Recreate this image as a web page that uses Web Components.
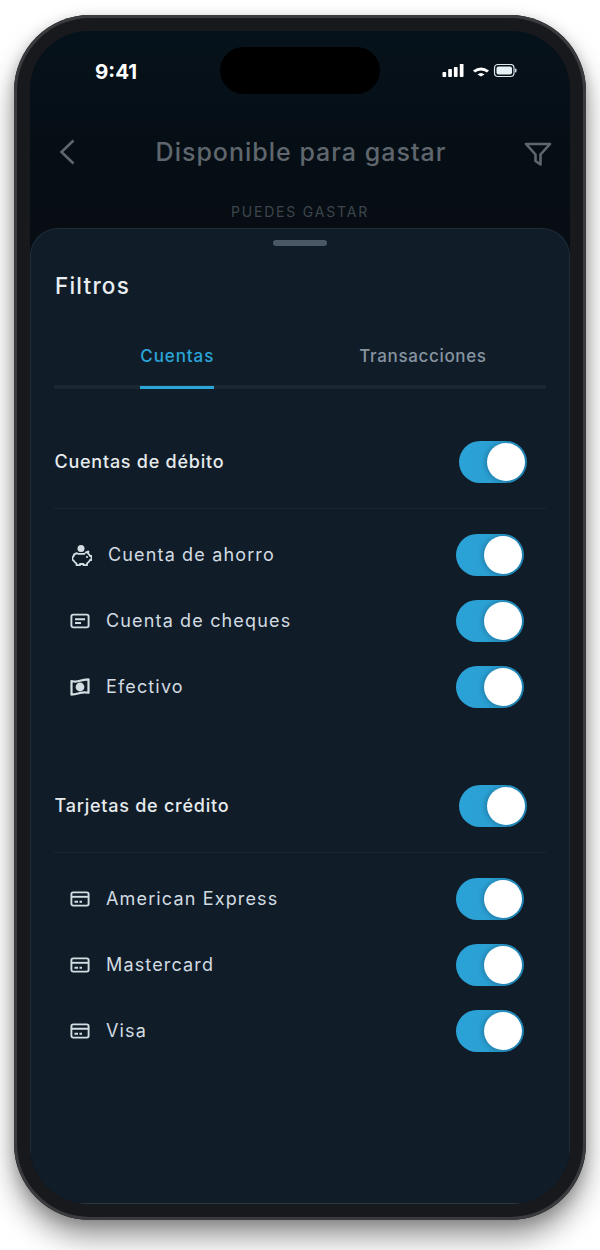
<!DOCTYPE html>
<html lang="es"><head><meta charset="utf-8"><title>Filtros</title>
<style>
html,body{margin:0;background:#fff}
body{font-family:Inter,"Noto Sans",sans-serif;padding:15px 14px 30px}
</style></head><body>
<x-phone>
  <x-status></x-status>
  <x-appbar></x-appbar>
  <x-sheet>
    <x-tabs></x-tabs>
    <x-section label="Cuentas de débito">
      <x-row icon="piggy" label="Cuenta de ahorro"></x-row>
      <x-row icon="cheque" label="Cuenta de cheques"></x-row>
      <x-row icon="cash" label="Efectivo"></x-row>
    </x-section>
    <x-section label="Tarjetas de crédito">
      <x-row icon="card" label="American Express"></x-row>
      <x-row icon="card" label="Mastercard"></x-row>
      <x-row icon="card" label="Visa"></x-row>
    </x-section>
  </x-sheet>
</x-phone>
<script>
const def=(name,html)=>customElements.define(name,class extends HTMLElement{
  connectedCallback(){ if(this.shadowRoot) return;
    const g=k=>this.getAttribute(k)||'';
    this.attachShadow({mode:'open'}).innerHTML=typeof html==='function'?html(g):html; }
});
def('x-phone',`<style>
:host{display:block;width:572px;height:1205px;box-sizing:border-box;border-radius:76px;background:#18191c;
 box-shadow:inset 0 0 0 3px #3a3b3e,0 18px 28px rgba(0,0,0,.38),0 4px 14px rgba(0,0,0,.2);padding:16px}
.screen{position:relative;height:100%;border-radius:58px;overflow:hidden;background:linear-gradient(180deg,#06121b 0,#060e15 120px,#070d13 200px);display:flex;flex-direction:column}
.island{position:absolute;left:190px;top:16px;width:160px;height:47px;border-radius:24px;background:#000}
</style><div class="screen"><slot></slot><div class="island"></div></div>`);
def('x-status',`<style>
:host{display:flex;justify-content:space-between;align-items:center;height:82px;padding:0 53px 0 65px;box-sizing:border-box;color:#fff}
.t{font:700 20.5px/1 Inter,sans-serif}
svg{display:block}
</style><span class="t">9:41</span>
<svg width="76" height="16" viewBox="0 0 76 16" fill="#fff">
<rect x="1.500" y="8" width="3.700" height="5" rx=".8"/><rect x="7.200" y="5" width="3.700" height="8" rx=".8"/><rect x="12.900" y="3" width="3.700" height="10" rx=".8"/><rect x="18.800" y="-.5" width="3.700" height="13.500" rx=".8"/>
<path d="M32 6.500 Q40 .5 48 6.500 L46 8.500 Q40 4.500 34 8.500Z"/><path d="M36.500 10.500 Q40 7.500 43.500 10.500 L40 12.500Z"/>
<rect x="53.500" y=".5" width="19.500" height="12" rx="3.500" fill="none" stroke="#dfe6ea" stroke-width="1.200"/><rect x="55.500" y="2.500" width="15.500" height="8" rx="2" fill="#e6f0f5"/><rect x="74" y="4.500" width="1.500" height="4" rx=".7" fill="#cfd6da"/>
</svg>`);
def('x-appbar',`<style>
:host{display:block;height:115px;box-sizing:border-box;text-align:center}
.bar{display:flex;align-items:center;justify-content:space-between;height:62px;margin-top:8px;padding:0 18px 0 28px}
h1{margin:0;font:500 25px/1 Inter,sans-serif;letter-spacing:1px;color:#5f666d}
p{margin:21px 0 0;font:400 14px/16px Inter,sans-serif;letter-spacing:1.8px;color:#3e464d}
svg{display:block;fill:none;stroke:#5f666d;stroke-width:2.600}
.f{margin-top:4px}
</style><div class="bar">
<svg width="20" height="28" viewBox="0 0 20 28"><path d="M15.500 2.500 3.500 14l12 11.500"/></svg>
<h1>Disponible para gastar</h1>
<svg class="f" width="28" height="24" viewBox="0 0 28 24" stroke-width="2"><path d="M2 2h24l-9.500 10.500V22.500l-5-3.500v-6.500Z" stroke-linejoin="round"/></svg>
</div><p>PUEDES GASTAR</p>`);
def('x-sheet',`<style>
:host{display:block;flex:1;box-sizing:border-box;background:#101d29;border:1px solid #1f2d3a;border-bottom-color:#2b3743;border-radius:28px 28px 0 0;padding:11px 23px 0;min-height:0}
.h{width:54px;height:6px;border-radius:3px;background:#4a5866;margin:0 auto}
.ti{margin:26px 0 0 1px;font:500 22.5px/28px Inter,sans-serif;letter-spacing:1.2px;color:#e9eef1}
</style><div class="h"></div><div class="ti">Filtros</div><slot></slot>`);
def('x-tabs',`<style>
:host{display:flex;margin-top:32px;height:57px;box-sizing:border-box;border-bottom:4px solid #1b2833}
.t{flex:1;display:flex;justify-content:center;font:500 17px/24px Inter,sans-serif;letter-spacing:.65px;color:#8794a0;padding-top:12px;box-sizing:border-box}
.t span{display:block;height:45px;box-sizing:border-box}
.on span{color:#2ba4d8;border-bottom:3px solid #2ba4d8;padding:0 0 0 .5px;letter-spacing:.9px}
</style><div class="t on"><span>Cuentas</span></div><div class="t"><span>Transacciones</span></div>`);
def('x-section',g=>`<style>
:host{display:block;margin-top:52px}
:host(:last-child){margin-top:77px}
.head{display:flex;justify-content:space-between;align-items:center;height:42px;padding:0 19px 25px 0;font:500 18px/24px Inter,sans-serif;letter-spacing:.75px;color:#e6ebee;border-bottom:1px solid #1a2733;box-sizing:content-box;margin-bottom:25px}
.head span{margin-left:.5px}
.rows{display:flex;flex-direction:column;gap:24px;padding-right:22px}
</style><div class="head"><span>${g('label')}</span><x-toggle></x-toggle></div><div class="rows"><slot></slot></div>`);
const icons={
piggy:[20,22,2,`<circle cx="9" cy="4.500" r="3.500" fill="currentColor" stroke="none"/><path d="M5.500 9C3 9.500 1.500 11 1.500 12.500 0 13 0 16 1.500 16.500 2.500 18 3.500 19 4.500 19.500V21.200h3.500V20h3.500v1.200H15v-1.700c1.500-1 2.500-2 3-3.500h1.500v-4H18c-.5-1-1-2-2-2.500l.5-2C15 7.800 14 8.500 13 9M5.500 9.800H13" stroke-width="1.800" stroke-linejoin="round"/><circle cx="15" cy="13" r="1.100" fill="currentColor" stroke="none"/>`],
cheque:[20,20,0,`<rect x="1.400" y="3.600" width="17.200" height="12.800" rx="1.800" stroke-width="1.900"/><path d="M5 8.200h10M5 12h6" stroke-width="1.900"/>`],
cash:[20,20,0,`<path d="M1.500 4Q6 5.200 10 3.800T18.500 2.300V15.800Q14 14.800 10 16T1.500 17.700Z" stroke-width="2.200" stroke-linejoin="round"/><circle cx="10" cy="10" r="4.400" fill="currentColor" stroke="none"/>`],
card:[20,20,0,`<rect x="1.400" y="3.400" width="17.200" height="13.200" rx="1.800" stroke-width="1.900"/><path d="M1.500 7.800h17" stroke-width="1.900"/><path d="M4.500 12.800h3.500M9.500 12.800h2.500" stroke-width="1.900"/>`]};
def('x-row',g=>{const [w,h,m,p]=icons[g('icon')];return `<style>
:host{display:flex;align-items:center;height:42px;justify-content:space-between;padding-left:16px;font:400 18px/24px Inter,sans-serif;letter-spacing:1.15px;color:#d2dbe1}
.l{display:flex;align-items:center;gap:16px}
svg{display:block;color:#d4dde2;fill:none;stroke:currentColor;margin-left:${m}px}
</style><span class="l"><svg width="${w}" height="${h}" viewBox="0 0 ${w} ${h}">${p}</svg><span>${g('label')}</span></span><x-toggle></x-toggle>`});
def('x-toggle',`<style>
:host{display:flex;justify-content:flex-end;align-items:center;flex:none;width:68px;height:42px;box-sizing:border-box;border-radius:21px;padding-right:2px;background:linear-gradient(100deg,#2ba3d8 0,#2a9fd2 50%,#1d7fae 100%)}
i{display:block;width:38px;height:38px;border-radius:50%;background:#fff;box-shadow:-2px 0 4px rgba(10,40,60,.25)}
</style><i></i>`);
</script>
</body></html>
